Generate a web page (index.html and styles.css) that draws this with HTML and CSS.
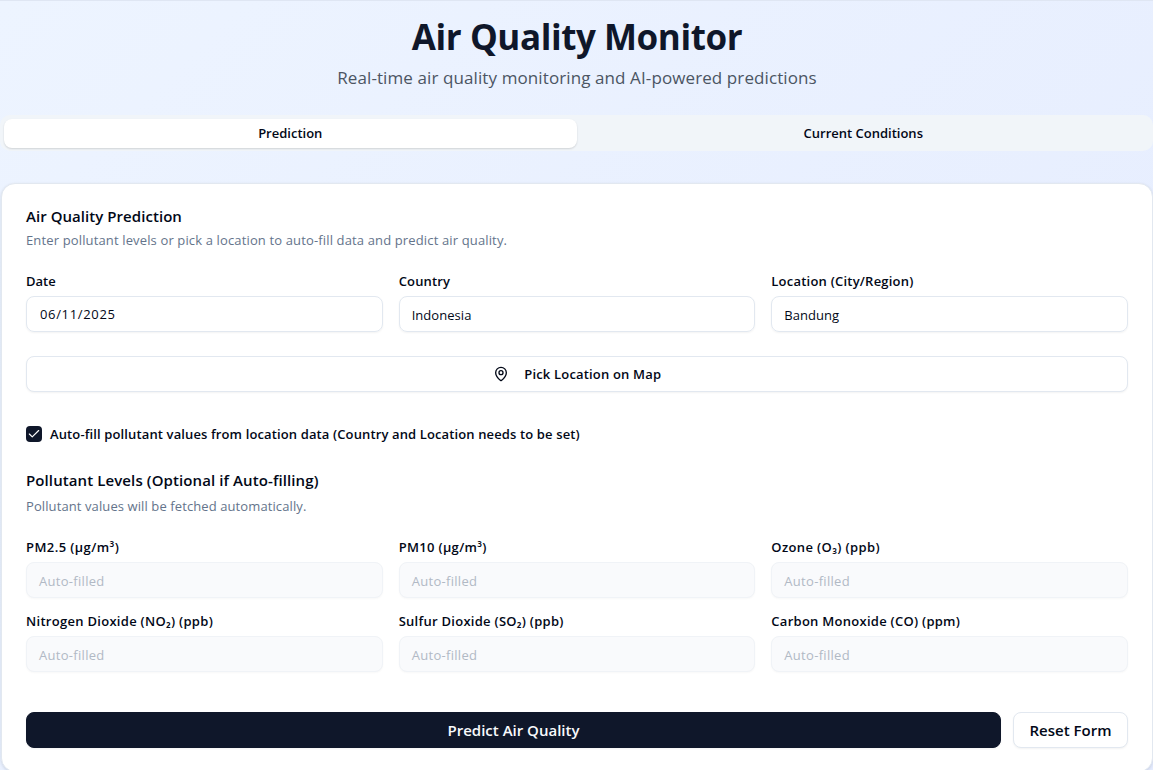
FILE: index.html
```html
<!DOCTYPE html>
<html lang="en">
<head>
<meta charset="utf-8">
<title>Air Quality Monitor</title>
<link rel="stylesheet" href="styles.css">
</head>
<body>
<main class="page">
  <header class="header">
    <h1 class="title"><span>Air Quality Monitor</span></h1>
    <p class="subtitle"><span>Real-time air quality monitoring and AI-powered predictions</span></p>
  </header>
  <nav class="tabs">
    <button class="tab tab-active"><span>Prediction</span></button>
    <button class="tab tab-current"><span>Current Conditions</span></button>
  </nav>
  <section class="card">
    <h2 class="card-title"><span>Air Quality Prediction</span></h2>
    <p class="card-text card-intro"><span>Enter pollutant levels or pick a location to auto-fill data and predict air quality.</span></p>
    <div class="grid">
      <div class="field"><label class="label l-date"><span>Date</span></label><div class="input input-date"><span>06/11/2025</span></div></div>
      <div class="field"><label class="label l-country"><span>Country</span></label><div class="input"><span>Indonesia</span></div></div>
      <div class="field"><label class="label l-location"><span>Location (City/Region)</span></label><div class="input"><span>Bandung</span></div></div>
    </div>
    <button class="button map-button">
      <svg class="pin" viewBox="0 0 24 24" fill="none" stroke="currentColor" stroke-width="2" stroke-linecap="round" stroke-linejoin="round"><path d="M20 10c0 4.993-5.539 10.193-7.399 11.799a1 1 0 0 1-1.202 0C9.539 20.193 4 14.993 4 10a8 8 0 0 1 16 0"/><circle cx="12" cy="10" r="3"/></svg>
      <span>Pick Location on Map</span>
    </button>
    <div class="check-row">
      <span class="checkbox"><svg class="check" viewBox="0 0 24 24" fill="none" stroke="currentColor" stroke-width="2" stroke-linecap="round" stroke-linejoin="round"><path d="M20 6 9 17l-5-5"/></svg></span>
      <label class="label l-auto"><span>Auto-fill pollutant values from location data (Country and Location needs to be set)</span></label>
    </div>
    <h3 class="section-title"><span>Pollutant Levels (Optional if Auto-filling)</span></h3>
    <p class="card-text section-text"><span>Pollutant values will be fetched automatically.</span></p>
    <div class="grid pollutants">
      <div class="field"><label class="label l-pm25"><span>PM2.5 (µg/m³)</span></label><div class="input input-off"><span>Auto-filled</span></div></div>
      <div class="field"><label class="label l-pm10"><span>PM10 (µg/m³)</span></label><div class="input input-off"><span>Auto-filled</span></div></div>
      <div class="field"><label class="label l-ozone"><span>Ozone (O₃) (ppb)</span></label><div class="input input-off"><span>Auto-filled</span></div></div>
      <div class="field"><label class="label l-no2"><span>Nitrogen Dioxide (NO₂) (ppb)</span></label><div class="input input-off"><span>Auto-filled</span></div></div>
      <div class="field"><label class="label l-so2"><span>Sulfur Dioxide (SO₂) (ppb)</span></label><div class="input input-off"><span>Auto-filled</span></div></div>
      <div class="field"><label class="label l-co"><span>Carbon Monoxide (CO) (ppm)</span></label><div class="input input-off"><span>Auto-filled</span></div></div>
    </div>
    <div class="actions">
      <button class="button submit"><span>Predict Air Quality</span></button>
      <button class="button reset"><span>Reset Form</span></button>
    </div>
  </section>
</main>
</body>
</html>
```
FILE: styles.css
```css
* { box-sizing: border-box; }
body {
  margin: 0;
  height: 770px;
  overflow: hidden;
  font-family: "Open Sans", "Noto Sans", sans-serif;
  color: #020817;
  background: linear-gradient(135deg, #edf4ff, #e2e9fe) 0 0 / 1153px 1500px;
}
h1, h2, h3, p { margin: 0; font-weight: 600; white-space: nowrap; }
button { font-family: inherit; color: inherit; border: 0; padding: 0; }
.page { border-top: 1px solid #dfe6f3; }
.header { height: 114px; padding: 16px 0 0 1px; text-align: center; }
.title { font-size: 35px; line-height: 40px; font-weight: 700; color: #0f172a; letter-spacing: -0.43px; }
.subtitle { margin-top: 7px; font-size: 17px; line-height: 28px; font-weight: 400; color: #4b5563; letter-spacing: 0.1px; }
.tabs { display: grid; grid-template-columns: 1fr 1fr; height: 36px; padding: 4px 4px 2px; background: #f1f5f9; border-radius: 10px; }
.tab { background: none; border-radius: 8px; font-size: 13px; font-weight: 600; line-height: 20px; padding-bottom: 2px; }
.tab-active { height: 29px; padding-bottom: 1px; background: #fff; box-shadow: 0 1px 2px rgb(0 0 0 / 14%); }
.tab-current { padding-left: 1px; }
.card {
  margin: 32px 0 0 1px;
  height: 589px;
  padding: 22px 24px 0;
  border: 1px solid #e2e8f0;
  border-radius: 14px;
  background: #fff;
  box-shadow: 0 1px 3px rgb(15 23 42 / 12%);
}
.card-title, .section-title { font-size: 15px; line-height: 20px; letter-spacing: 0.05px; }
.section-title { letter-spacing: 0.1px; }
.card-text { font-size: 13px; font-weight: 400; line-height: 20px; color: #64748b; letter-spacing: 0.14px; }
.card-intro { margin-top: 4px; }
.section-text { letter-spacing: 0.1px; }
.grid { display: grid; grid-template-columns: repeat(3, 1fr); column-gap: 16px; margin-top: 21px; }
.label { display: block; font-size: 13px; font-weight: 600; line-height: 20px; white-space: nowrap; }
.l-country { letter-spacing: 0.15px; }
.l-location { letter-spacing: 0.22px; }
.l-auto { letter-spacing: 0.125px; }
.l-pm25 { letter-spacing: 0.42px; }
.l-pm10 { letter-spacing: 0.33px; }
.l-ozone { letter-spacing: 0.38px; }
.l-no2 { letter-spacing: 0.29px; }
.l-so2 { letter-spacing: 0.27px; }
.l-co { letter-spacing: 0.27px; }
.input {
  display: flex;
  align-items: center;
  height: 36px;
  margin-top: 5px;
  padding: 1px 12px 0;
  border: 1px solid #e2e8f0;
  border-radius: 8px;
  font-size: 13px;
  letter-spacing: 0.05px;
  box-shadow: 0 1px 2px rgb(0 0 0 / 5%);
}
.input-date { padding: 0 13px 1px; letter-spacing: 0.66px; }
.input-off { background: #f9fafc; border-color: #f0f3f7; color: #b1b9c5; letter-spacing: 0.3px; box-shadow: 0 1px 2px rgb(0 0 0 / 3%); }
.button {
  display: flex;
  align-items: center;
  justify-content: center;
  height: 36px;
  background: #fff;
  border: 1px solid #e2e8f0;
  border-radius: 8px;
  font-weight: 600;
  font-size: 15px;
  box-shadow: 0 1px 2px rgb(0 0 0 / 5%);
}
.map-button { width: 100%; margin-top: 24px; gap: 15.5px; font-size: 13px; letter-spacing: 0.18px; }
.pin { width: 16px; height: 16px; }
.check-row { display: flex; align-items: center; gap: 8px; height: 20px; margin-top: 32px; }
.checkbox { display: grid; place-items: center; width: 16px; height: 16px; border-radius: 4px; background: #0f172a; color: #fff; }
.check { width: 14px; height: 14px; }
.section-title { margin-top: 26px; }
.section-text { margin-top: 6px; }
.pollutants { row-gap: 13px; }
.actions { display: flex; gap: 12px; margin-top: 40px; }
.submit { flex: 1; background: #0f172a; border-color: #0f172a; color: #f8fafc; }
.reset { width: 115px; }
```
